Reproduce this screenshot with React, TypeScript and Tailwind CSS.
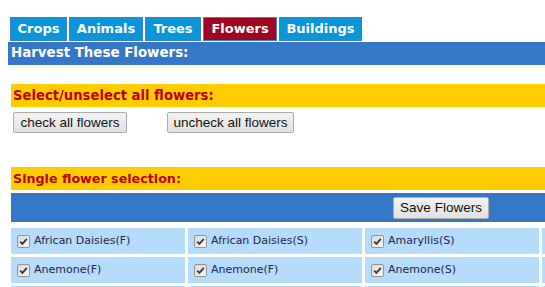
import React from "react";

const tabs: [string, string][] = [
  ["Crops", "w-[57px]"],
  ["Animals", "w-[74px]"],
  ["Trees", "w-[56px]"],
  ["Flowers", "w-[74px]"],
  ["Buildings", "w-[83px]"],
];

const rows: string[][] = [
  ["African Daisies(F)", "African Daisies(S)", "Amaryllis(S)", ""],
  ["Anemone(F)", "Anemone(F)", "Anemone(S)", ""],
  ["", "", "", ""],
];

function Check() {
  return (
    <svg width="13" height="13" viewBox="0 0 13 13" className="shrink-0">
      <defs>
        <linearGradient id="cbg" x1="0" y1="0" x2="1" y2="1">
          <stop offset="0" stopColor="#d8d8d8" />
          <stop offset="1" stopColor="#f8f8f8" />
        </linearGradient>
      </defs>
      <rect x="0.5" y="0.5" width="12" height="12" rx="1.5" fill="url(#cbg)" stroke="#949494" />
      <path d="M3.2 6.6 L5.4 8.9 L9.8 3.8" fill="none" stroke="#3a3a3a" strokeWidth="1.8" />
    </svg>
  );
}

const verdana = { fontFamily: '"DejaVu Sans", Verdana, sans-serif' };
const arial = { fontFamily: '"Liberation Sans", Arial, sans-serif' };

export default function App() {
  return (
    <div className="w-[545px] h-[287px] overflow-hidden bg-white" style={verdana}>
      <div className="w-[900px] pl-[8px] pt-[17px]">
        <div className="flex gap-[2px] pl-[2px]">
          {tabs.map(([t, w]) => (
            <div
              key={t}
              className={`h-[24px] ${w} flex items-center justify-center border border-[#3d7fcf] text-white font-bold text-[13px] ${
                t === "Flowers" ? "bg-[#a00521]" : "bg-[#0a94d9]"
              }`}
            >
              {t}
            </div>
          ))}
        </div>
        <div className="mt-[1px] h-[23px] bg-[#3676c6] text-white font-bold text-[13.4px] flex items-center pl-[3px]">
          Harvest These Flowers:
        </div>
        <div className="pl-[3px]">
          <div className="mt-[19px] h-[23px] bg-[#ffcc00] text-[#bb0000] font-bold text-[13.2px] flex items-center pl-[2px]">
            Select/unselect all flowers:
          </div>
          <div className="mt-[5px] flex pl-[2px] gap-[40px]" style={arial}>
            <button className="h-[21px] w-[114px] border border-[#acacac] rounded-[2px] bg-gradient-to-b from-[#f3f3f3] to-[#e1e1e1] text-[13.5px] text-[#111] leading-none">
              check all flowers
            </button>
            <button className="h-[21px] w-[127px] border border-[#acacac] rounded-[2px] bg-gradient-to-b from-[#f3f3f3] to-[#e1e1e1] text-[13.5px] text-[#111] leading-none">
              uncheck all flowers
            </button>
          </div>
          <div className="mt-[34px] h-[23px] bg-[#ffcc00] text-[#bb0000] font-bold text-[12.7px] flex items-center pl-[2px]">
            Single flower selection:
          </div>
          <div className="mt-[3px] h-[29px] bg-[#3676c6] flex items-center pl-[382px]" style={arial}>
            <button className="h-[22px] w-[96px] border border-[#acacac] rounded-[2px] bg-gradient-to-b from-[#f3f3f3] to-[#e1e1e1] text-[13.5px] text-[#111] leading-none">
              Save Flowers
            </button>
          </div>
          <div className="mt-[3px] flex flex-col gap-[3px] pt-[3px]">
            {rows.map((r, i) => (
              <div key={i} className="flex gap-[3px]">
                {r.map((c, j) => (
                  <div
                    key={j}
                    className="w-[174px] h-[26px] bg-[#b5dcfa] flex items-center pl-[6px] gap-[4px] text-[11px] text-[#24244e]"
                  >
                    {c && <Check />}
                    {c && <span>{c}</span>}
                  </div>
                ))}
              </div>
            ))}
          </div>
        </div>
      </div>
    </div>
  );
}
